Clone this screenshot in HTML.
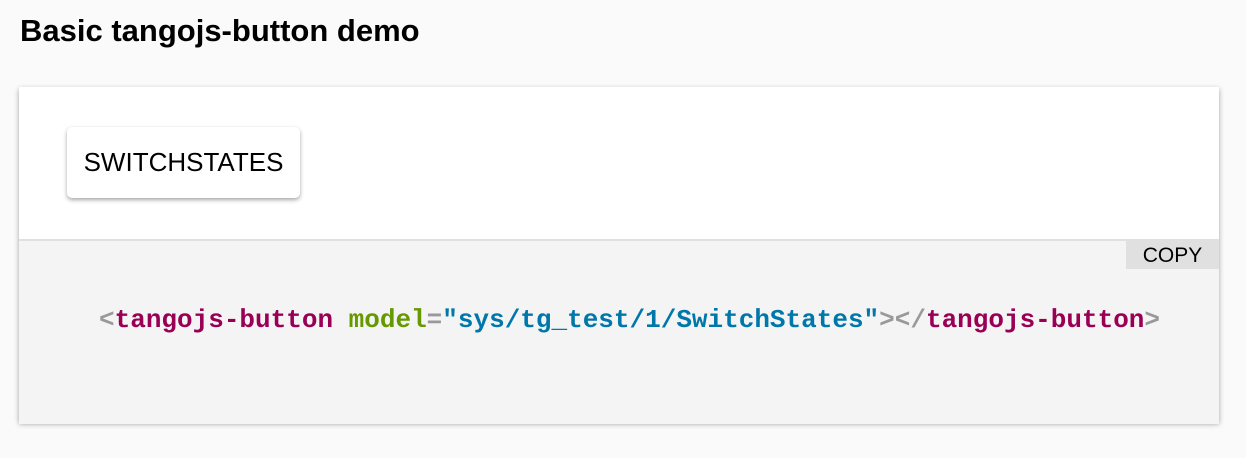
<!DOCTYPE html>
<html><head><meta charset="utf-8"><style>
html,body{margin:0;padding:0;}
body{width:1246px;height:458px;background:#fafafa;font-family:"Liberation Sans",Arial,sans-serif;position:relative;overflow:hidden;}
h1{position:absolute;left:20px;top:13px;margin:0;font-size:31px;font-weight:bold;color:#000;letter-spacing:0px;}
.card{position:absolute;left:19px;top:87px;width:1200px;height:335px;background:#fff;box-shadow:0 2px 5px rgba(0,0,0,0.35);}
.btn{position:absolute;left:48px;top:40px;width:233px;height:71px;background:#fff;border-radius:5px;box-shadow:0 2px 4px rgba(0,0,0,0.35);font-size:26px;line-height:71px;text-align:center;color:#000;}
.code{position:absolute;left:0;top:152px;width:1200px;height:183px;background:#f4f4f4;border-top:2px solid #e0e0e0;}
.copy{position:absolute;right:0;top:0;width:93px;height:28px;background:#e0e0e0;font-size:21px;line-height:29px;text-align:center;color:#000;}
pre{position:absolute;left:80px;top:64px;margin:0;font-family:"Liberation Mono",monospace;font-weight:bold;font-size:26px;line-height:30px;color:#999;}
.t{color:#905}.a{color:#690}.v{color:#07a}
</style></head><body>
<h1>Basic tangojs-button demo</h1>
<div class="card">
<div class="btn">SWITCHSTATES</div>
<div class="code"><div class="copy">COPY</div>
<pre>&lt;<span class="t">tangojs-button</span> <span class="a">model</span>=<span class="v">"sys/tg_test/1/SwitchStates"</span>&gt;&lt;/<span class="t">tangojs-button</span>&gt;</pre>
</div>
</div>
</body></html>
